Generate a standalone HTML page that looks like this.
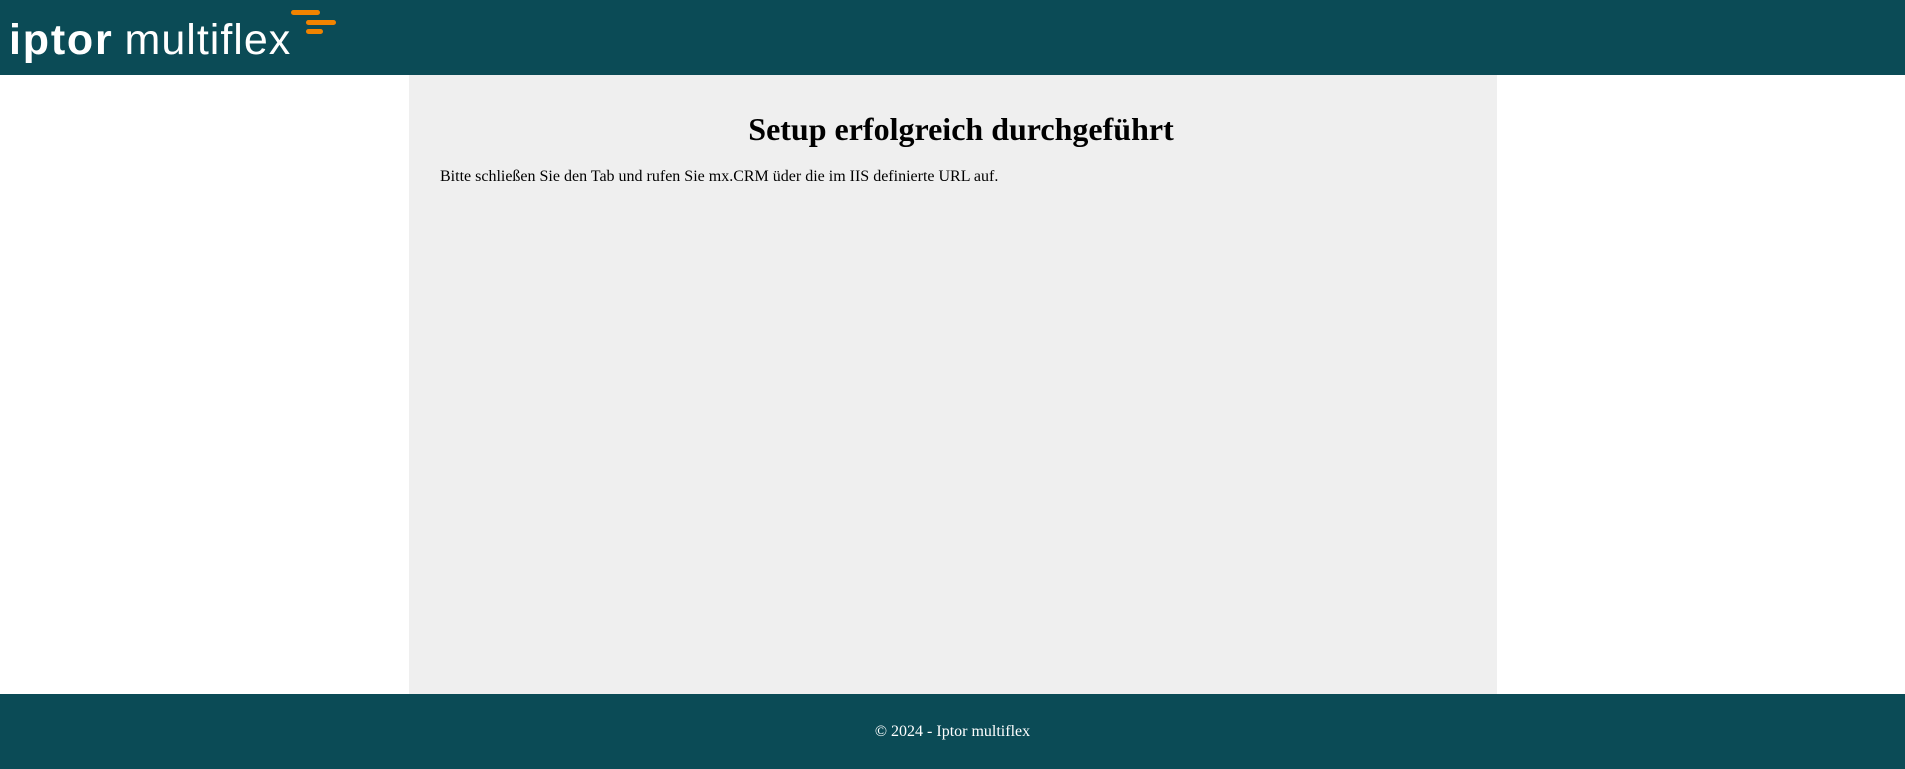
<!DOCTYPE html>
<html><head><meta charset="utf-8"><style>
html,body{margin:0;padding:0;width:1905px;height:769px;overflow:hidden;background:#fff;font-family:"Liberation Serif",serif;}
.hdr{position:absolute;left:0;top:0;width:1905px;height:75px;background:#0b4b56;}
.logo{position:absolute;left:9px;top:19px;font-family:"Liberation Sans",sans-serif;font-size:43px;line-height:43px;color:#fff;white-space:nowrap}
.logo b{letter-spacing:1.8px}
.logo span{letter-spacing:1px;margin-left:11px}
.bar{position:absolute;height:5px;border-radius:3px;background:#f08300}
.panel{position:absolute;left:409px;top:75px;width:1088px;height:619px;background:#efefef}
h1{position:absolute;left:417px;width:1088px;top:111px;margin:0;text-align:center;font-size:32px;line-height:36px;font-weight:bold}
.p{position:absolute;left:440px;top:167px;font-size:16px;line-height:20px}
.ftr{position:absolute;left:0;top:694px;width:1905px;height:75px;background:#0b4b56;color:#fff;text-align:center;font-size:16px;line-height:20px}
</style></head><body>
<div class="hdr">
<div class="logo"><b>iptor</b><span>multiflex</span></div>
<div class="bar" style="left:291px;top:10px;width:29px"></div>
<div class="bar" style="left:306px;top:20px;width:30px"></div>
<div class="bar" style="left:306px;top:29px;width:17px"></div>
</div>
<div class="panel"></div>
<h1>Setup erfolgreich durchgeführt</h1>
<div class="p">Bitte schließen Sie den Tab und rufen Sie mx.CRM üder die im IIS definierte URL auf.</div>
<div class="ftr"><div style="padding-top:28px">© 2024 - Iptor multiflex</div></div>
</body></html>
